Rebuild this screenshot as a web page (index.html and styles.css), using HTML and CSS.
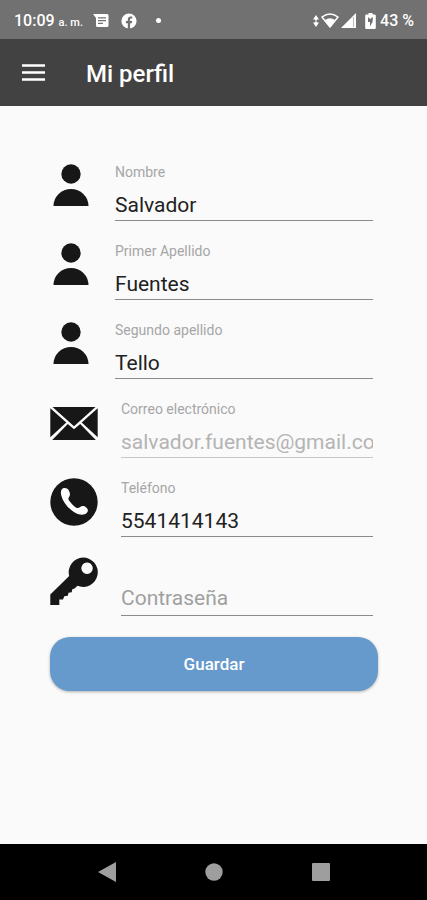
FILE: index.html
```html
<!DOCTYPE html>
<html lang="es">
<head>
  <meta charset="UTF-8" />
  <meta name="viewport" content="width=device-width, initial-scale=1.0"/>
  <title>Mi perfil</title>
  <link rel="stylesheet" href="styles.css">
</head>
<body>
  <div class="status-bar">
    <div class="status-left">
      <span class="time">10:09 <small>a. m.</small></span>
      <svg class="icon-message" width="16" height="14" viewBox="0 0 16 14"><path fill="#fff" fill-rule="evenodd" d="M0 0h14a1.500 1.500 0 0 1 1.500 1.500v10a1.500 1.500 0 0 1-1.500 1.500H4.500A1.500 1.500 0 0 1 3 11.500V4zM5 3.200v1.300h8V3.200zM5 6v1.300h8V6zM5 8.800v1.300h5V8.800z"/></svg>
      <svg class="icon-facebook" width="16" height="16" viewBox="0 0 16 16"><circle cx="8" cy="8" r="7.600" fill="#fff"/><path fill="#717171" d="M6.800 16v-5.700H4.900V8h1.900V6.400c0-2 1.100-3 2.900-3l1.600.1v2h-1c-.9 0-1.200.5-1.200 1.100V8h2.100l-.4 2.300H9.100V16z"/></svg>
      <span class="dot"></span>
    </div>
    <div class="status-right">
      <svg width="6" height="12" viewBox="0 0 6 12"><path fill="#fff" d="M3 0l3 4.500H4v1H2v-1H0zM3 12l3-4.500H4v-1H2v1H0z"/></svg>
      <svg width="18" height="15" viewBox="0 0 18 15"><path fill="none" stroke="#fff" stroke-width="1.500" stroke-linejoin="round" d="M1 4Q9-2 17 4L9 14z"/><path fill="#fff" d="M4 7Q9 3.500 14 7L9 14z"/></svg>
      <svg width="15" height="15" viewBox="0 0 15 15"><path fill="#fff" d="M0 15L15 0v15z"/><path stroke="#bbb" d="M12.500 4v10"/></svg>
      <svg class="icon-battery" width="11" height="16" viewBox="0 0 11 16"><path fill="#fff" d="M3.500 0h4v1.500h2a1.300 1.300 0 0 1 1.300 1.300v11.700A1.300 1.300 0 0 1 9.500 16h-8A1.300 1.300 0 0 1 .2 14.500V2.800a1.300 1.300 0 0 1 1.300-1.300h2z"/><path fill="#717171" d="M3 4l2 2 3-2-.5 5-2.500 4.500V9H3z"/></svg>
      <span class="battery">43 %</span>
    </div>
  </div>

  <header class="app-bar">
    <button class="menu-btn" type="button" aria-label="Menú">
      <svg width="24" height="17" viewBox="0 0 24 17"><path stroke="#fff" stroke-width="2.400" d="M0 1.500h23M0 8.500h23M0 15.500h23"/></svg>
    </button>
    <h1>Mi perfil</h1>
  </header>

  <form class="profile">
    <div class="field">
      <svg class="icon-person" viewBox="0 0 42 48"><circle cx="21" cy="12" r="9.700"/><path d="M3.500 44a17.500 17 0 0 1 35 0z"/></svg>
      <div class="field-body">
        <label for="nombre">Nombre</label>
        <input type="text" id="nombre" value="Salvador">
      </div>
    </div>
    <div class="field">
      <svg class="icon-person" viewBox="0 0 42 48"><circle cx="21" cy="12" r="9.700"/><path d="M3.500 44a17.500 17 0 0 1 35 0z"/></svg>
      <div class="field-body">
        <label for="apellido1">Primer Apellido</label>
        <input type="text" id="apellido1" value="Fuentes">
      </div>
    </div>
    <div class="field">
      <svg class="icon-person" viewBox="0 0 42 48"><circle cx="21" cy="12" r="9.700"/><path d="M3.500 44a17.500 17 0 0 1 35 0z"/></svg>
      <div class="field-body">
        <label for="apellido2">Segundo apellido</label>
        <input type="text" id="apellido2" value="Tello">
      </div>
    </div>
    <div class="field">
      <svg class="icon-wide" viewBox="0 0 48 48"><path d="M2.500 8h43L24 27.200zM.3 9.200L16.300 23.500.3 38.200zM47.700 9.200v29L31.700 23.500zM17.800 24.900l6.200 5.400 6.200-5.400L45.800 41H2.200z"/></svg>
      <div class="field-body">
        <label for="correo">Correo electrónico</label>
        <input type="text" id="correo" value="salvador.fuentes@gmail.com" disabled>
      </div>
    </div>
    <div class="field">
      <svg class="icon-wide" viewBox="0 0 48 48"><circle cx="24" cy="24" r="23.700"/><path fill="#fff" d="M11.800 11.300c1.600-2.200 5.600-1.700 6.800.8 1.300 2.700 2 4.600.6 6.600-1.200 1.700-1.100 2.600.4 4.600 1.900 2.600 4 4.600 6.300 6.100 1.700 1.100 2.700.8 4.300-.5 2-1.500 4.200-.9 5.800.4 2.400 2 2.400 4.300.4 6-3.200 2.600-8.100 1.500-13.200-1.900-6-4-10.400-9.900-11.900-16-.6-2.500-.6-4.600.5-6.100z"/></svg>
      <div class="field-body">
        <label for="telefono">Teléfono</label>
        <input type="tel" id="telefono" value="5541414143">
      </div>
    </div>
    <div class="field">
      <svg class="icon-wide" viewBox="0 0 48 48"><path fill-rule="evenodd" d="M33 .5a14.700 14.700 0 1 1-5.500 28.300L24.500 31.500l-2.200.8-.6 3-3.200.5-.7 3-3.500.4L13 42.500H9.300V48H.3V37.500L19.200 19A14.700 14.700 0 0 1 33 .5zM37 5.500a5.700 5.700 0 1 0 .1 0z"/></svg>
      <div class="field-body">
        <input type="password" id="contrasena" placeholder="Contraseña" aria-label="Contraseña">
      </div>
    </div>
    <button class="save-btn" type="button">Guardar</button>
  </form>

  <nav class="nav-bar">
    <button type="button" aria-label="Atrás"><svg width="18" height="20" viewBox="0 0 18 20"><path d="M18 0v20L0 10z"/></svg></button>
    <button type="button" aria-label="Inicio"><svg width="18" height="18" viewBox="0 0 18 18"><circle cx="9" cy="9" r="8.700"/></svg></button>
    <button type="button" aria-label="Recientes"><svg width="18" height="18" viewBox="0 0 18 18"><rect width="18" height="18" rx="1"/></svg></button>
  </nav>
</body>
</html>
```
FILE: styles.css
```css
* {
  box-sizing: border-box;
}

body {
  margin: 0;
  min-height: 100vh;
  display: flex;
  flex-direction: column;
  font-family: Roboto, sans-serif;
  background: #fafafa;
  color: #212121;
}

svg {
  display: block;
  flex-shrink: 0;
}

button {
  font-family: inherit;
  border: none;
  padding: 0;
  background: none;
  cursor: pointer;
}

/* status bar */
.status-bar {
  display: flex;
  align-items: center;
  justify-content: space-between;
  height: 39px;
  padding: 2px 13px 0 14px;
  background: #717171;
  color: #fff;
  font-size: 16px;
  font-weight: 500;
}
.status-left,
.status-right {
  display: flex;
  align-items: center;
}
.status-right {
  gap: 2px;
}
.time small {
  font-size: 11px;
}
.icon-message {
  margin-left: 10px;
}
.icon-facebook {
  margin-left: 12px;
}
.dot {
  width: 5px;
  height: 5px;
  margin-left: 19px;
  border-radius: 50%;
  background: #fff;
}
.icon-battery {
  margin-left: 7px;
}
.battery {
  margin-left: 2px;
}

/* app bar */
.app-bar {
  display: flex;
  align-items: center;
  height: 67px;
  padding: 0 22px;
  gap: 40px;
  background: #424242;
  color: #fff;
}
.app-bar h1 {
  margin: 0;
  padding-top: 3px;
  font-size: 24px;
  font-weight: 500;
}

/* form */
.profile {
  flex: 1;
  padding: 36px 49px 36px 50px;
}
.field {
  display: flex;
  align-items: flex-start;
  gap: 23px;
  height: 79px;
  padding: 20px 5px 0 0;
}
.field svg {
  height: 48px;
  fill: #171717;
}
.icon-person {
  width: 42px;
}
.icon-wide {
  width: 48px;
}
.field-body {
  flex: 1;
  min-width: 0;
  height: 100%;
  display: flex;
  flex-direction: column;
  justify-content: flex-end;
}
.field label {
  font-size: 14px;
  line-height: 16px;
  color: #a6a6a6;
}
.field input {
  width: 100%;
  height: 41px;
  padding: 9px 0 0;
  border: none;
  border-bottom: 1px solid #8a8a8a;
  border-radius: 0;
  outline: none;
  background: none;
  font-family: inherit;
  font-size: 21px;
  color: #212121;
}
.field input:placeholder-shown {
  padding-top: 5px;
}
.field input::placeholder {
  color: #a0a0a0;
}
.field input:disabled {
  color: #b4b4b4;
  border-bottom-color: #c8c8c8;
}
.save-btn {
  display: block;
  width: 100%;
  height: 54px;
  margin-top: 21px;
  border-radius: 20px;
  background: #6699cc;
  color: #fff;
  font-size: 17px;
  font-weight: 500;
  box-shadow: 0 1px 3px rgba(0, 0, 0, 0.3);
}

/* android navigation */
.nav-bar {
  display: flex;
  height: 56px;
  padding: 0 53px;
  background: #000;
}
.nav-bar button {
  flex: 1;
  display: flex;
  align-items: center;
  justify-content: center;
}
.nav-bar svg {
  fill: #9e9e9e;
}
```
